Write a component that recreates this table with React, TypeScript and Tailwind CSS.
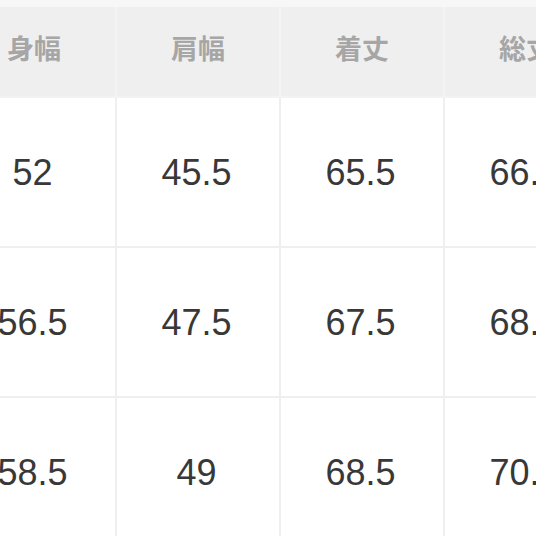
const headers = ["身幅", "肩幅", "着丈", "総丈"]
const rows = [
  ["52", "45.5", "65.5", "66.5"],
  ["56.5", "47.5", "67.5", "68.5"],
  ["58.5", "49", "68.5", "70.5"],
]

export default function App() {
  return (
    <div className="w-[536px] h-[536px] overflow-hidden bg-white">
      <div className="h-[7px] bg-[#f7f7f7]" />
      <div className="-ml-[47px] w-[660px]">
        <div className="flex bg-[#efefef] border-b-2 border-[#f3f3f3]">
          {headers.map((h) => (
            <div
              key={h}
              className="w-[164px] h-[89px] shrink-0 flex items-center justify-center border-r-2 border-[#f4f4f4] text-[27px] font-semibold text-[#a6a6a6] pb-[6px]"
              style={{ fontFamily: '"Noto Sans CJK JP", sans-serif' }}
            >
              {h}
            </div>
          ))}
        </div>
        {rows.map((r, i) => (
          <div key={i} className="flex border-b-2 border-[#efefef]">
            {r.map((v, j) => (
              <div
                key={j}
                className="w-[164px] h-[148px] shrink-0 flex items-center justify-center border-r-2 border-[#efefef] text-[36px] text-[#383838] pt-[2px] pr-[3px]"
                style={{ fontFamily: '"Liberation Sans", Arial, sans-serif' }}
              >
                {v}
              </div>
            ))}
          </div>
        ))}
      </div>
    </div>
  )
}
